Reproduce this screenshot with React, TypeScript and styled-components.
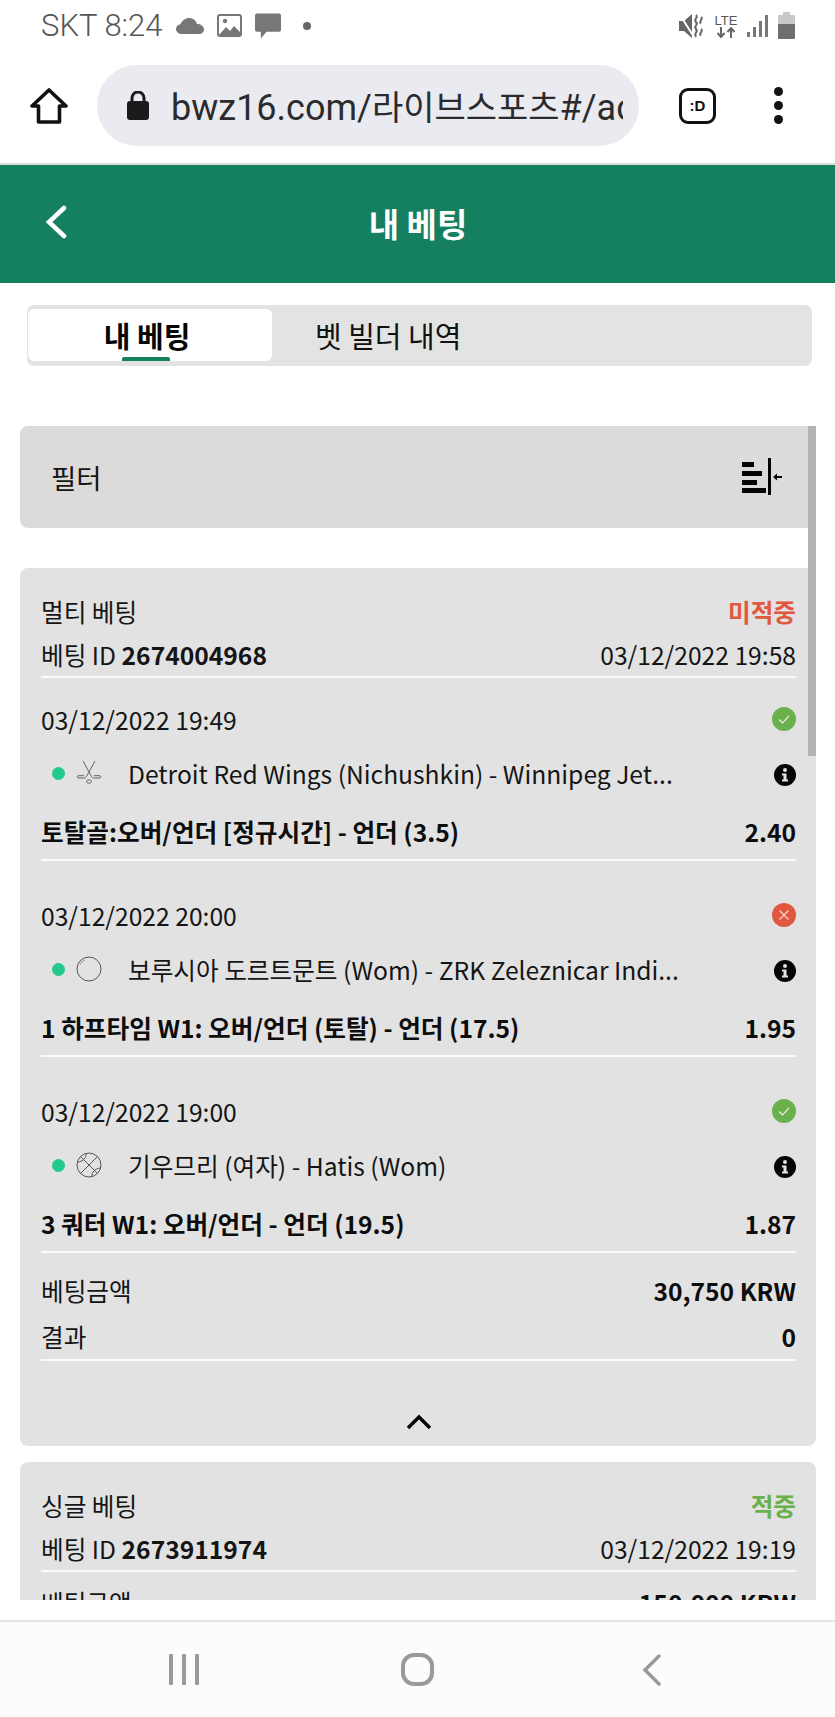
import React from 'react';
import styled, { createGlobalStyle } from 'styled-components';

const GlobalStyle = createGlobalStyle`
  html, body {
    margin: 0;
    padding: 0;
    background: #fff;
  }
  * {
    box-sizing: border-box;
  }
`;

type Result = 'won' | 'lost';
type Sport = 'hockey' | 'ball' | 'basket';

interface Leg {
  date: string;
  result: Result;
  sport: Sport;
  event: string;
  market: string;
  odds: string;
}

const legs: Leg[] = [
  {
    date: '03/12/2022 19:49',
    result: 'won',
    sport: 'hockey',
    event: 'Detroit Red Wings (Nichushkin) - Winnipeg Jet...',
    market: '토탈골:오버/언더 [정규시간] - 언더 (3.5)',
    odds: '2.40',
  },
  {
    date: '03/12/2022 20:00',
    result: 'lost',
    sport: 'ball',
    event: '보루시아 도르트문트 (Wom) - ZRK Zeleznicar Indi...',
    market: '1 하프타임 W1: 오버/언더 (토탈) - 언더 (17.5)',
    odds: '1.95',
  },
  {
    date: '03/12/2022 19:00',
    result: 'won',
    sport: 'basket',
    event: '기우므리 (여자) - Hatis (Wom)',
    market: '3 쿼터 W1: 오버/언더 - 언더 (19.5)',
    odds: '1.87',
  },
];

function SportIcon({ sport }: { sport: Sport }) {
  if (sport === 'hockey') {
    return (
      <svg width="26" height="26" viewBox="0 0 26 26" fill="none" stroke="#666" strokeWidth="1">
        <path d="M7 1l8.500 15.500c.5 1 1.300 1.500 2.500 1.500h6c.8 0 1-2 0-2.300h-6" />
        <path d="M19 1l-8.500 15.500c-.5 1-1.300 1.500-2.500 1.500H2c-.8 0-1-2 0-2.300h6" />
        <ellipse cx="13" cy="21.500" rx="2.500" ry="1.700" />
      </svg>
    );
  }
  if (sport === 'ball') {
    return (
      <svg width="26" height="26" viewBox="0 0 26 26" fill="none" stroke="#555" strokeWidth="1">
        <circle cx="13" cy="13" r="12" />
        <path d="M4 9c1-2.500 2.500-4 5-5" stroke="#999" />
      </svg>
    );
  }
  return (
    <svg width="26" height="26" viewBox="0 0 26 26" fill="none" stroke="#555" strokeWidth="1">
      <circle cx="13" cy="13" r="12" />
      <path d="M4.500 4.500l17 17M21.500 4.500l-17 17" />
      <path d="M10 1.500c.5 4 -2.500 8-8.500 8.500M24.500 16c-6 .5-9 4.500-8.500 8.500" />
    </svg>
  );
}

function ResultIcon({ result }: { result: Result }) {
  if (result === 'won') {
    return (
      <svg width="24" height="24" viewBox="0 0 24 24">
        <circle cx="12" cy="12" r="12" fill="#6ab04c" />
        <path d="M7 12.500l3.500 3.500 6.500-7" fill="none" stroke="#e4f1de" strokeWidth="1.200" />
      </svg>
    );
  }
  return (
    <svg width="24" height="24" viewBox="0 0 24 24">
      <circle cx="12" cy="12" r="12" fill="#e2583e" />
      <path d="M7.500 7.500l9 9M16.500 7.500l-9 9" fill="none" stroke="#f6d8d2" strokeWidth="1.300" />
    </svg>
  );
}

function LegBlock({ leg }: { leg: Leg }) {
  return (
    <LegWrap>
      <Row $h={44}>
        <Plain>{leg.date}</Plain>
        <ResultIcon result={leg.result} />
      </Row>
      <Row $h={64}>
        <EventLeft>
          <LiveDot />
          <SportSlot>
            <SportIcon sport={leg.sport} />
          </SportSlot>
          <Plain>{leg.event}</Plain>
        </EventLeft>
        <InfoMark width="22" height="22" viewBox="0 0 22 22">
          <circle cx="11" cy="11" r="11" fill="#050505" />
          <circle cx="11" cy="6" r="2" fill="#e2e2e2" />
          <path d="M8 9.500h4.500v6H14v2H8v-2h1.500v-4H8z" fill="#e2e2e2" />
        </InfoMark>
      </Row>
      <Row $h={52}>
        <Strong>{leg.market}</Strong>
        <Strong>{leg.odds}</Strong>
      </Row>
    </LegWrap>
  );
}

function App() {
  return (
    <Screen>
      <GlobalStyle />
      <StatusBar>
        <StatusLeft>
          <StatusText>SKT 8:24</StatusText>
          <svg width="28" height="16" viewBox="0 0 28 16" fill="#777">
            <path d="M6 16c-3 0-6-2-6-5 0-2.500 2-4.500 4.500-4.800C6 2.500 9.500 0 13 0c4 0 7 2.500 8 6 3.500 0 7 2 7 5.500 0 2.500-2 4.500-5 4.500z" />
          </svg>
          <svg width="25" height="23" viewBox="0 0 25 23">
            <rect x="1" y="1" width="23" height="21" rx="2" fill="#fff" stroke="#777" strokeWidth="2" />
            <path d="M2 21l7-8 4 4 4-5 7 7v3H2z" fill="#777" />
            <circle cx="8" cy="7" r="2.200" fill="#777" />
          </svg>
          <svg width="26" height="26" viewBox="0 0 27 26" fill="#777">
            <path d="M2 0h23a2 2 0 0 1 2 2v15a2 2 0 0 1-2 2H12l-6 7v-7H2a2 2 0 0 1-2-2V2a2 2 0 0 1 2-2z" />
          </svg>
          <StatusDot />
        </StatusLeft>
        <StatusRight>
          <svg width="26" height="26" viewBox="0 0 26 26" fill="none">
            <path d="M0 8h5l8-7v24l-8-7H0z" fill="#666" />
            <path d="M17 2c3 2.500-3 4 0 7s-3 4 0 7 -3 4 0 8M22 4c3 2.500-3 4 0 6.500M22 16c3 2.500-3 4 0 6.500" stroke="#666" strokeWidth="2" />
            <path d="M1 2l14 22" stroke="#fff" strokeWidth="2" />
          </svg>
          <LteIcon>
            <LteLabel>LTE</LteLabel>
            <svg width="22" height="11" viewBox="0 0 22 11" fill="none" stroke="#666" strokeWidth="2">
              <path d="M6 0v9M2.500 6L6 10l3.500-4M16 11V2M12.500 5L16 1l3.500 4" />
            </svg>
          </LteIcon>
          <svg width="22" height="24" viewBox="0 0 22 24" fill="#777">
            <rect x="0" y="18" width="3" height="5" />
            <rect x="6" y="13" width="3" height="10" />
            <rect x="12" y="7" width="3" height="16" />
            <rect x="18" y="1" width="3" height="22" />
          </svg>
          <svg width="17" height="27" viewBox="0 0 17 27">
            <path d="M5 0h7v3h4a1 1 0 0 1 1 1v22a1 1 0 0 1-1 1H1a1 1 0 0 1-1-1V4a1 1 0 0 1 1-1h4z" fill="#c9c9c9" />
            <path d="M0 12h17v14a1 1 0 0 1-1 1H1a1 1 0 0 1-1-1z" fill="#6f6f6f" />
          </svg>
        </StatusRight>
      </StatusBar>

      <Toolbar>
        <HomeSlot>
          <svg width="38" height="36" viewBox="0 0 38 36" fill="none" stroke="#111" strokeWidth="3.600" strokeLinejoin="round">
            <path d="M2 18L19 2l17 16h-6.500v16h-21V18z" />
          </svg>
        </HomeSlot>
        <UrlPill>
          <svg width="22" height="29" viewBox="0 0 22 29">
            <path d="M5 12V7a6 6 0 0 1 12 0v5" fill="none" stroke="#1b1b1d" strokeWidth="3" />
            <rect x="0" y="10" width="22" height="19" rx="3" fill="#1b1b1d" />
          </svg>
          <UrlText>
            bwz16.com/<UrlHangul>라이브스포츠</UrlHangul>#/ac
          </UrlText>
        </UrlPill>
        <TabCount>:D</TabCount>
        <Kebab>
          <KebabDot />
          <KebabDot />
          <KebabDot />
        </Kebab>
      </Toolbar>

      <Viewport>
        <AppHeader>
          <BackSlot>
            <svg width="22" height="34" viewBox="0 0 22 34" fill="none" stroke="#fff" strokeWidth="4.500" strokeLinecap="round">
              <path d="M19 3L4 17l15 14" />
            </svg>
          </BackSlot>
          <HeaderTitle>내 베팅</HeaderTitle>
        </AppHeader>

        <Tabs>
          <ActiveTab>
            내 베팅
            <TabMarker />
          </ActiveTab>
          <IdleTab>벳 빌더 내역</IdleTab>
        </Tabs>

        <FilterBar>
          <FilterLabel>필터</FilterLabel>
          <svg width="41" height="38" viewBox="0 0 41 38" fill="#050505">
            <rect x="0" y="4" width="12" height="5" />
            <rect x="0" y="13" width="20" height="5" />
            <rect x="0" y="22" width="15" height="5" />
            <rect x="0" y="30" width="24" height="5" />
            <rect x="26" y="0" width="3" height="37" />
            <path d="M31 19l4-3.500v2.500h5v2h-5v2.500z" />
          </svg>
        </FilterBar>

        <Card>
          <Row $h={45}>
            <Plain>멀티 베팅</Plain>
            <StatusLabel $color="#e2583e">미적중</StatusLabel>
          </Row>
          <SummaryRow>
            <Plain>
              베팅 ID <b>2674004968</b>
            </Plain>
            <Plain>03/12/2022 19:58</Plain>
          </SummaryRow>

          {legs.map((leg, key) => (
            <LegBlock key={key} leg={leg} />
          ))}

          <Totals>
            <Row $h={44}>
              <Plain>베팅금액</Plain>
              <Strong>30,750 KRW</Strong>
            </Row>
            <Row $h={47}>
              <Plain>결과</Plain>
              <Strong>0</Strong>
            </Row>
          </Totals>

          <Collapse>
            <svg width="26" height="16" viewBox="0 0 26 16" fill="none" stroke="#050505" strokeWidth="3.500">
              <path d="M2 14L13 3l11 11" />
            </svg>
          </Collapse>
        </Card>

        <Card>
          <Row $h={45}>
            <Plain>싱글 베팅</Plain>
            <StatusLabel $color="#6ab04c">적중</StatusLabel>
          </Row>
          <SummaryRow>
            <Plain>
              베팅 ID <b>2673911974</b>
            </Plain>
            <Plain>03/12/2022 19:19</Plain>
          </SummaryRow>
          <SingleTotals>
            <Plain>베팅금액</Plain>
            <Strong>150,000 KRW</Strong>
          </SingleTotals>
        </Card>

        <ScrollThumb />
      </Viewport>

      <NavBar>
        <svg width="30" height="31" viewBox="0 0 30 31" fill="#9a9a9a">
          <rect x="0" y="0" width="4" height="31" rx="1" />
          <rect x="13" y="0" width="4" height="31" rx="1" />
          <rect x="26" y="0" width="4" height="31" rx="1" />
        </svg>
        <svg width="33" height="33" viewBox="0 0 33 33" fill="none" stroke="#9a9a9a" strokeWidth="4">
          <rect x="2" y="2" width="29" height="29" rx="11" />
        </svg>
        <svg width="20" height="32" viewBox="0 0 20 32" fill="none" stroke="#9a9a9a" strokeWidth="3.500" strokeLinecap="round">
          <path d="M17 2L3 16l14 14" />
        </svg>
      </NavBar>
    </Screen>
  );
}

const Screen = styled.div`
  width: 835px;
  height: 1717px;
  display: flex;
  flex-direction: column;
  overflow: hidden;
  background: #fff;
  color: #111;
  font-family: 'Noto Sans CJK KR', 'Noto Sans', sans-serif;
`;

const StatusBar = styled.div`
  height: 55px;
  padding: 0 40px 4px 41px;
  display: flex;
  justify-content: space-between;
  align-items: center;
`;

const StatusLeft = styled.div`
  display: flex;
  align-items: center;
  gap: 13px;
`;

const StatusText = styled.span`
  font-family: Roboto, sans-serif;
  font-weight: 300;
  font-size: 31px;
  color: #555;
`;

const StatusDot = styled.span`
  width: 8px;
  height: 8px;
  margin-left: 9px;
  border-radius: 50%;
  background: #666;
`;

const StatusRight = styled.div`
  display: flex;
  align-items: center;
  gap: 9px;
`;

const LteIcon = styled.div`
  width: 24px;
  display: flex;
  flex-direction: column;
  align-items: center;
`;

const LteLabel = styled.span`
  font-family: 'Liberation Sans', sans-serif;
  font-size: 13px;
  line-height: 13px;
  color: #555;
`;

const Toolbar = styled.div`
  height: 110px;
  padding-top: 10px;
  padding-bottom: 17px;
  display: flex;
  align-items: center;
  border-bottom: 2px solid #dedede;
`;

const HomeSlot = styled.div`
  width: 97px;
  display: flex;
  justify-content: center;
`;

const UrlPill = styled.div`
  width: 542px;
  height: 81px;
  padding: 0 16px 0 30px;
  display: flex;
  align-items: center;
  gap: 22px;
  overflow: hidden;
  border-radius: 40px;
  background: #e9ebf0;
`;

const UrlText = styled.span`
  flex: 1;
  overflow: hidden;
  white-space: nowrap;
  font-family: Roboto, 'Noto Sans CJK KR', sans-serif;
  font-size: 36px;
  color: #2b2b2d;
`;

const UrlHangul = styled.span`
  font-size: 34px;
`;

const TabCount = styled.div`
  width: 37px;
  height: 36px;
  margin-left: 40px;
  display: flex;
  justify-content: center;
  align-items: center;
  border: 3.5px solid #111;
  border-radius: 9px;
  font-family: 'Liberation Sans', sans-serif;
  font-weight: 700;
  font-size: 15px;
`;

const Kebab = styled.div`
  margin-left: 58px;
  display: flex;
  flex-direction: column;
  gap: 5px;
`;

const KebabDot = styled.span`
  width: 9px;
  height: 9px;
  border-radius: 50%;
  background: #111;
`;

const Viewport = styled.div`
  position: relative;
  height: 1435px;
  overflow: hidden;
`;

const AppHeader = styled.div`
  position: relative;
  height: 118px;
  padding-bottom: 3px;
  display: flex;
  justify-content: center;
  align-items: center;
  background: #15805f;
`;

const BackSlot = styled.div`
  position: absolute;
  left: 45px;
  top: 40px;
  display: flex;
`;

const HeaderTitle = styled.h1`
  margin: 0 0 0 1px;
  font-size: 33px;
  font-weight: 700;
  color: #fff;
`;

const Tabs = styled.div`
  width: 785px;
  height: 61px;
  margin: 22px 0 0 27px;
  padding: 4px 1px 5px;
  display: flex;
  border-radius: 7px;
  background: #e3e3e3;
`;

const ActiveTab = styled.div`
  position: relative;
  width: 244px;
  padding-right: 6px;
  display: flex;
  justify-content: center;
  align-items: center;
  border-radius: 6px;
  background: #fff;
  font-size: 29px;
  font-weight: 700;
  color: #050505;
`;

const TabMarker = styled.span`
  position: absolute;
  left: 94px;
  bottom: 0;
  width: 48px;
  height: 4px;
  border-radius: 2px 2px 0 0;
  background: #15805f;
`;

const IdleTab = styled.div`
  padding-left: 43px;
  display: flex;
  align-items: center;
  font-size: 29px;
  color: #111;
`;

const FilterBar = styled.div`
  height: 102px;
  margin: 60px 19px 40px 20px;
  padding: 0 33px 0 31px;
  display: flex;
  justify-content: space-between;
  align-items: center;
  border-radius: 8px;
  background: #dcdbd9;
`;

const FilterLabel = styled.span`
  font-size: 27.5px;
  color: #151515;
`;

const Card = styled.div`
  margin: 0 19px 16px 20px;
  padding: 20px 20px 0 21px;
  border-radius: 8px;
  background: #e2e2e2;
`;

const Row = styled.div<{ $h: number }>`
  height: ${(p) => p.$h}px;
  display: flex;
  justify-content: space-between;
  align-items: center;
`;

const SummaryRow = styled.div`
  height: 45px;
  padding-bottom: 2px;
  display: flex;
  justify-content: space-between;
  align-items: center;
  border-bottom: 2px solid #fafafa;
`;

const Plain = styled.span`
  font-size: 24.65px;
  white-space: nowrap;
  color: #151515;

  b {
    font-weight: 700;
  }
`;

const Strong = styled.span`
  font-size: 24.65px;
  font-weight: 700;
  white-space: nowrap;
  color: #0d0d0d;
`;

const StatusLabel = styled.span<{ $color: string }>`
  font-size: 24.65px;
  font-weight: 700;
  color: ${(p) => p.$color};
`;

const LegWrap = styled.div`
  padding: 19px 0 2px;
  border-bottom: 2px solid #fafafa;

  & + & {
    margin-top: 13px;
  }
`;

const EventLeft = styled.div`
  display: flex;
  align-items: center;
`;

const InfoMark = styled.svg`
  margin-top: 3px;
`;

const LiveDot = styled.span`
  width: 13px;
  height: 13px;
  margin-left: 11px;
  border-radius: 50%;
  background: #22c98a;
`;

const SportSlot = styled.div`
  width: 63px;
  padding-left: 11px;
  display: flex;
`;

const Totals = styled.div`
  margin-top: 15px;
  border-bottom: 2px solid #fafafa;
`;

const SingleTotals = styled.div`
  margin-top: 8px;
  height: 44px;
  display: flex;
  justify-content: space-between;
  align-items: center;
`;

const Collapse = styled.div`
  height: 85px;
  padding-top: 37px;
  display: flex;
  justify-content: center;
  align-items: center;
`;

const ScrollThumb = styled.span`
  position: absolute;
  top: 261px;
  right: 19px;
  width: 8px;
  height: 330px;
  background: #b4b4b4;
`;

const NavBar = styled.div`
  height: 97px;
  margin-top: 20px;
  display: grid;
  grid-template-columns: repeat(3, 234px);
  justify-content: center;
  justify-items: center;
  align-items: center;
  border-top: 2px solid #e4e4e4;
  background: #fcfcfc;
`;

export default App;
